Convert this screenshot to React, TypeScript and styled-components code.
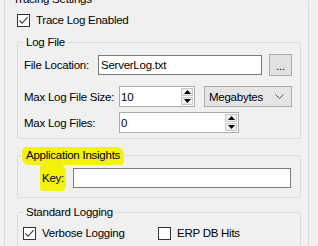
import React from 'react';
import styled, { createGlobalStyle } from 'styled-components';

const GlobalStyle = createGlobalStyle`
  html, body {
    margin: 0;
    padding: 0;
    width: 318px;
    height: 246px;
    overflow: hidden;
    background: #f0f0f0;
  }
  body {
    font-family: "Liberation Sans", Arial, sans-serif;
    font-size: 11.5px;
    letter-spacing: -0.25px;
    color: #000;
  }
`;

const Page = styled.div`
  padding-left: 4px;
  margin-top: -8px;
`;

const Group = styled.fieldset<{ $width?: number; $top?: number }>`
  margin: ${p => p.$top ?? 0}px 0 0 0;
  padding: 0;
  border: 1px solid #dcdcdc;
  border-radius: 2px;
  width: ${p => (p.$width ? `${p.$width}px` : 'auto')};
  box-sizing: border-box;
  min-width: 0;
`;

const Legend = styled.legend<{ $highlight?: boolean }>`
  margin-left: 6px;
  padding: 0 2px;
  line-height: 14px;
  height: 14px;
  background: ${p => (p.$highlight ? '#f2f20a' : 'transparent')};
  box-shadow: ${p => (p.$highlight ? '0 1px 0 2px #f2f20a' : 'none')};
  border-radius: ${p => (p.$highlight ? '3px 6px 2px 5px' : '0')};
`;

const OuterBody = styled.div`
  padding: 8px 7px 0 12px;
`;

const GroupBody = styled.div<{ $pad: string }>`
  padding: ${p => p.$pad};
  display: flex;
  flex-direction: column;
`;

const CheckRow = styled.div`
  display: flex;
  align-items: center;
  height: 13px;
  line-height: 13px;
`;

const CheckItem = styled.span<{ $width?: number }>`
  display: flex;
  align-items: center;
  gap: 6px;
  width: ${p => (p.$width ? `${p.$width}px` : 'auto')};
`;

const Box = styled.span`
  width: 13px;
  height: 13px;
  box-sizing: border-box;
  border: 1px solid #333;
  background: #fff;
  display: flex;
  align-items: center;
  justify-content: center;
  flex: none;
`;

const FormRow = styled.div<{ $h: number; $gap?: number }>`
  display: flex;
  align-items: center;
  height: ${p => p.$h}px;
  margin-top: ${p => p.$gap ?? 0}px;
`;

const Label = styled.span<{ $width: number }>`
  width: ${p => p.$width}px;
  flex: none;
  white-space: nowrap;
`;

const Marker = styled.span`
  background: #f2f20a;
  padding: 8px 2px 7px 2px;
  margin-left: -2px;
  border-radius: 4px 8px 5px 3px;
`;

const TextBox = styled.div<{ $width: number }>`
  width: ${p => p.$width}px;
  height: 20px;
  box-sizing: border-box;
  border: 1px solid #7a7a7a;
  background: #fff;
  padding: 0 2px;
  display: flex;
  align-items: center;
  flex: none;
`;

const Button = styled.div`
  width: 23px;
  height: 22px;
  box-sizing: border-box;
  margin-left: 7px;
  border: 1px solid #adadad;
  background: #e1e1e1;
  display: flex;
  align-items: center;
  justify-content: center;
  padding-top: 2px;
`;

const Numeric = styled.div<{ $width: number }>`
  width: ${p => p.$width}px;
  height: 21px;
  box-sizing: border-box;
  border: 1px solid #acacac;
  background: #fff;
  display: flex;
  flex: none;
`;

const NumValue = styled.span`
  flex: 1;
  padding-left: 1px;
  display: flex;
  align-items: center;
`;

const Spin = styled.div`
  width: 12px;
  margin: 1px 1px 1px 0;
  display: flex;
  flex-direction: column;
  gap: 1px;
`;

const SpinHalf = styled.div`
  flex: 1;
  background: #f0f0f0;
  border: 1px solid #c8c8c8;
  display: flex;
  align-items: center;
  justify-content: center;
`;

const Combo = styled.div`
  width: 88px;
  height: 21px;
  box-sizing: border-box;
  margin-left: 9px;
  border: 1px solid #acacac;
  background: #e5e5e5;
  display: flex;
  align-items: center;
  justify-content: space-between;
  padding: 0 7px 0 4px;
`;

const Arrow = ({ up }: { up?: boolean }) => (
  <svg width="7" height="4" viewBox="0 0 7 4">
    <path d={up ? 'M0 4 L3.5 0 L7 4 Z' : 'M0 0 L3.5 4 L7 0 Z'} fill="#000" />
  </svg>
);

const Check = () => (
  <svg width="11" height="11" viewBox="0 0 11 11">
    <path d="M1.5 5.5 L4.2 8.3 L9.5 2.2" fill="none" stroke="#333" strokeWidth="1.1" />
  </svg>
);

const Checkbox = ({ checked, label, width }: { checked?: boolean; label: string; width?: number }) => (
  <CheckItem $width={width}>
    <Box>{checked && <Check />}</Box>
    {label}
  </CheckItem>
);

const NumBox = ({ value, width }: { value: string; width: number }) => (
  <Numeric $width={width}>
    <NumValue>{value}</NumValue>
    <Spin>
      <SpinHalf><Arrow up /></SpinHalf>
      <SpinHalf><Arrow /></SpinHalf>
    </Spin>
  </Numeric>
);

export default function App() {
  return (
    <>
      <GlobalStyle />
      <Page>
        <Group $width={305}>
          <Legend>Tracing Settings</Legend>
          <OuterBody>
            <CheckRow>
              <Checkbox checked label="Trace Log Enabled" />
            </CheckRow>

            <Group $width={284} $top={8}>
              <Legend>Log File</Legend>
              <GroupBody $pad="5px 0 5px 6px">
                <FormRow $h={22}>
                  <Label $width={74}>File Location:</Label>
                  <TextBox $width={164}>ServerLog.txt</TextBox>
                  <Button>...</Button>
                </FormRow>
                <FormRow $h={21} $gap={10}>
                  <Label $width={95}>Max Log File Size:</Label>
                  <NumBox value="10" width={76} />
                  <Combo>
                    <span>Megabytes</span>
                    <svg width="9" height="5" viewBox="0 0 9 5">
                      <path d="M0.5 0.5 L4.5 4.5 L8.5 0.5" fill="none" stroke="#555" strokeWidth="1" />
                    </svg>
                  </Combo>
                </FormRow>
                <FormRow $h={21} $gap={5}>
                  <Label $width={95}>Max Log Files:</Label>
                  <NumBox value="0" width={120} />
                </FormRow>
              </GroupBody>
            </Group>

            <Group $width={284} $top={9}>
              <Legend $highlight>Application Insights</Legend>
              <GroupBody $pad="5px 0 9px 24px">
                <FormRow $h={21}>
                  <Label $width={31}><Marker>Key:</Marker></Label>
                  <TextBox $width={218} />
                </FormRow>
              </GroupBody>
            </Group>

            <Group $width={284} $top={7}>
              <Legend>Standard Logging</Legend>
              <GroupBody $pad="8px 0 20px 5px">
                <CheckRow>
                  <Checkbox checked label="Verbose Logging" width={135} />
                  <Checkbox label="ERP DB Hits" />
                </CheckRow>
              </GroupBody>
            </Group>
          </OuterBody>
        </Group>
      </Page>
    </>
  );
}
